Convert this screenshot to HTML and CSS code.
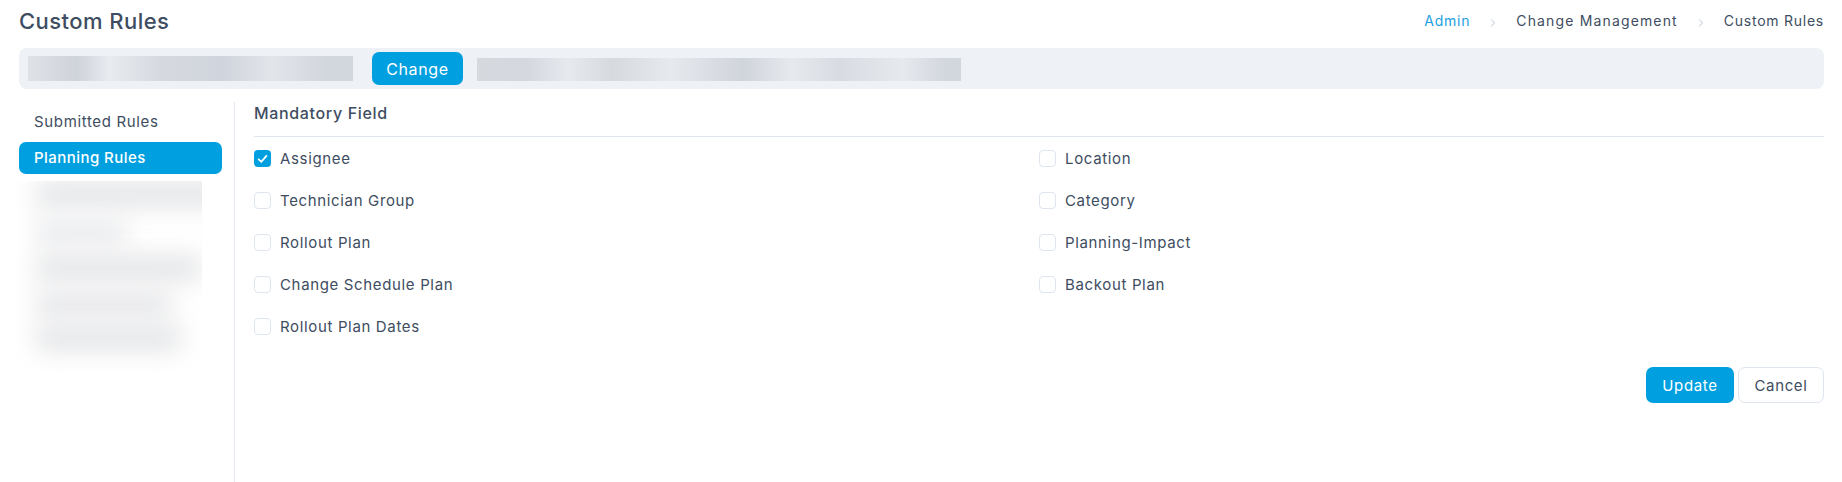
FILE: index.html
```html
<!DOCTYPE html>
<html lang="en">
<head>
<meta charset="utf-8">
<title>Custom Rules</title>
<link rel="stylesheet" href="styles.css">
</head>
<body>
<header class="top">
  <h1 class="title">Custom Rules</h1>
  <nav class="crumbs">
    <a class="crumb-link">Admin</a>
    <svg class="sep" viewBox="0 0 6 10"><path d="M1.2 1.5 4.6 5 1.2 8.5" fill="none" stroke="#b9c5d6" stroke-width="1"/></svg>
    <span class="crumb-long">Change Management</span>
    <svg class="sep" viewBox="0 0 6 10"><path d="M1.2 1.5 4.6 5 1.2 8.5" fill="none" stroke="#b9c5d6" stroke-width="1"/></svg>
    <span>Custom Rules</span>
  </nav>
</header>
<section class="strip">
  <div class="smear smear-a"></div>
  <button class="btn btn-primary btn-change">Change</button>
  <div class="smear smear-b"></div>
</section>
<main class="body">
  <aside class="side">
    <a class="side-item">Submitted Rules</a>
    <a class="side-item active">Planning Rules</a>
    <div class="side-blur">
      <i class="b b1"></i><i class="b b2"></i><i class="b b3"></i><i class="b b4"></i><i class="b b5"></i>
    </div>
  </aside>
  <section class="panel">
    <h2 class="panel-title">Mandatory Field</h2>
    <div class="fields">
      <label class="field"><span class="box checked"><svg viewBox="0 0 17 17"><path d="M4.2 8.8 7.3 11.8 12.9 5.4" fill="none" stroke="#fff" stroke-width="1.8"/></svg></span>Assignee</label>
      <label class="field"><span class="box"></span>Location</label>
      <label class="field"><span class="box"></span>Technician Group</label>
      <label class="field"><span class="box"></span>Category</label>
      <label class="field"><span class="box"></span>Rollout Plan</label>
      <label class="field"><span class="box"></span>Planning-Impact</label>
      <label class="field"><span class="box"></span>Change Schedule Plan</label>
      <label class="field"><span class="box"></span>Backout Plan</label>
      <label class="field"><span class="box"></span>Rollout Plan Dates</label>
    </div>
    <div class="actions">
      <button class="btn btn-primary btn-update">Update</button>
      <button class="btn btn-ghost">Cancel</button>
    </div>
  </section>
</main>
</body>
</html>
```
FILE: styles.css
```css
* { box-sizing: border-box; }
html, body { margin: 0; height: 100%; }
body {
  width: 1842px;
  height: 482px;
  overflow: hidden;
  background: #fff;
  padding: 0 18px 0 19px;
  color: #3e4d61;
  font-family: Inter, "Liberation Sans", sans-serif;
  font-size: 15px;
  font-weight: 400;
  letter-spacing: 0.65px;
  display: flex;
  flex-direction: column;
}
.top {
  height: 48px;
  display: flex;
  justify-content: space-between;
  align-items: flex-start;
}
.title {
  margin: 7px 0 0;
  font-size: 22px;
  line-height: 28px;
  font-weight: 500;
  letter-spacing: 0.45px;
}
.crumbs {
  margin-top: 11px;
  display: flex;
  align-items: center;
  font-size: 14px;
  letter-spacing: 0.75px;
  line-height: 20px;
}
.crumb-link { color: #1b9fdf; }
.crumb-long { letter-spacing: 1.15px; }
.sep { width: 6px; height: 10px; margin: 3px 20px 0 20px; }
.strip {
  height: 41px;
  background: #eef1f6;
  border-radius: 8px;
  display: flex;
  align-items: center;
  padding-left: 9px;
}
.smear { height: 25px; }
.smear-a {
  width: 325px;
  background: linear-gradient(90deg, #dfe2e7, #cfd3da 15%, #e8ebf0 25%, #d6d9df 40%, #d0d4dc 60%, #e2e5ea 75%, #d2d6dd 92%);
}
.smear-b {
  width: 484px;
  height: 23px;
  margin: 2px 0 0 14px;
  background: linear-gradient(90deg, #d6d9de, #d4d7de 10%, #e6e9ee 19%, #d6dade 28%, #e6e9ee 40%, #d0d4db 55%, #e6e9ee 65%, #d8dce2 75%, #e6e9ee 88%, #d2d6dd 97%);
}
.btn {
  font: inherit;
  letter-spacing: inherit;
  border-radius: 7px;
  cursor: pointer;
}
.btn-primary { background: #009fdf; color: #fff; border: 0; }
.btn-change { width: 91px; height: 33px; margin-left: 19px; font-size: 16px; }
.body { flex: 1; display: flex; padding-top: 13px; }
.side {
  width: 215px;
  padding-top: 4px;
  flex: none;
  display: flex;
  flex-direction: column;
}
.side-item {
  height: 32px;
  line-height: 32px;
  padding-left: 15px;
  width: 203px;
  border-radius: 7px;
}
.side-item.active {
  margin-top: 4px;
  background: #009fdf;
  color: #fff;
  font-weight: 500;
  letter-spacing: 0.45px;
}
.side-blur {
  position: relative;
  margin: 7px 0 0 -3px;
  width: 186px;
  height: 190px;
  overflow: hidden;
}
.b {
  position: absolute;
  left: 20px;
  height: 26px;
  background: #e4e5e7;
  filter: blur(12px);
}
.b1 { top: 0; width: 200px; }
.b2 { top: 38px; width: 90px; background: #eaebed; }
.b3 { top: 74px; width: 165px; }
.b4 { top: 110px; width: 135px; background: #e6e7e9; }
.b5 { top: 144px; width: 145px; }
.panel {
  flex: 1;
  border-left: 1px solid #e3e8f0;
  padding-left: 19px;
}
.panel-title {
  margin: 0;
  height: 35px;
  line-height: 23px;
  font-size: 16px;
  font-weight: 500;
  border-bottom: 1px solid #dee5ef;
}
.fields {
  display: grid;
  grid-template-columns: 1fr 1fr;
  grid-auto-rows: 42px;
  height: 211px;
}
.field {
  display: flex;
  align-items: center;
  gap: 9px;
}
.box {
  width: 17px;
  height: 17px;
  flex: none;
  border: 1px solid #dee5ef;
  border-radius: 4px;
  background: #fff;
}
.box svg { display: block; width: 17px; height: 17px; }
.box.checked { background: #009fdf; border: 0; }
.actions {
  margin-top: 19px;
  display: flex;
  justify-content: flex-end;
  gap: 4px;
}
.btn-update { width: 88px; height: 36px; }
.btn-ghost {
  width: 86px;
  height: 36px;
  background: #fff;
  border: 1px solid #dee5ef;
  color: #3e4d61;
}
```
